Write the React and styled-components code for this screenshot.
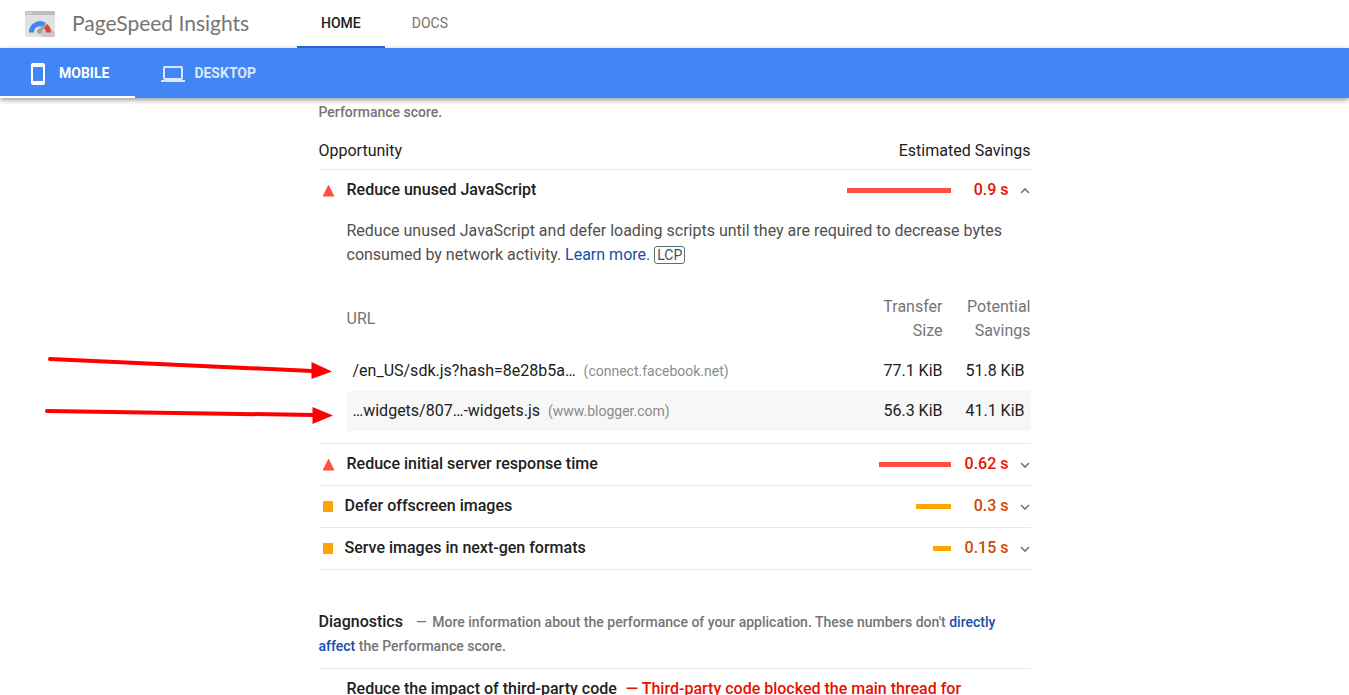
import React, {useState} from "react";
import styled, {createGlobalStyle} from "styled-components";

const GlobalStyle = createGlobalStyle`
    * {
        box-sizing: border-box;
    }
    body {
        margin: 0;
        background: #fff;
        color: #212121;
        font-family: Roboto, "Liberation Sans", sans-serif;
        font-size: 16px;
        line-height: 24px;
    }
`;

//whole window, the report is cut off at the bottom
const Page = styled.div`
    position: relative;
    display: flex;
    flex-direction: column;
    height: 100vh;
    overflow: hidden;
`;

//white bar with the logo and the site tabs
const TopBar = styled.header`
    display: flex;
    flex: none;
    align-items: stretch;
    height: 48px;
    padding-left: 24px;
    background: #fff;
`;

const Brand = styled.a`
    display: flex;
    align-items: center;
    gap: 16px;
    width: 273px;
    color: #757575;
    font-family: Lato, Roboto, sans-serif;
    font-size: 21px;
    text-decoration: none;
`;

const BrandName = styled.span`
    padding-bottom: 3px;
`;

const SiteNav = styled.nav`
    display: flex;
    gap: 3px;
`;

const SiteTab = styled.a`
    padding: 12px 24px 0;
    border-bottom: 2px solid ${(props) => (props.$active ? "#3367d6" : "transparent")};
    color: ${(props) => (props.$active ? "#212121" : "#757575")};
    font-size: 14px;
    font-weight: ${(props) => (props.$active ? 500 : 400)};
    line-height: 22px;
    text-decoration: none;
`;

//blue bar with the mobile / desktop switch
const DeviceBar = styled.div`
    position: relative;
    z-index: 1;
    display: flex;
    flex: none;
    height: 50px;
    background: #4285f4;
    box-shadow: 0 2px 5px rgba(0, 0, 0, 0.4);
`;

const DeviceTab = styled.button`
    display: flex;
    align-items: center;
    gap: 9px;
    padding: 3px 26px 0;
    border: none;
    border-bottom: 2px solid ${(props) => (props.$active ? "#fff" : "transparent")};
    background: none;
    color: #fff;
    font-family: inherit;
    font-size: 14px;
    font-weight: 700;
    cursor: pointer;

    & > * {
        opacity: ${(props) => (props.$active ? 1 : 0.8)};
    }
`;

const DeviceLabel = styled.span`
    padding-bottom: 2px;
`;

const Report = styled.main`
    width: 100%;
    max-width: 712px;
    margin: 0 auto;
    padding-top: 2px;
`;

const Note = styled.span`
    color: #757575;
    font-size: 14px;
    font-weight: 500;
`;

const Link = styled.a`
    color: #174ea6;
    text-decoration: none;
`;

const ColumnTitles = styled.div`
    display: flex;
    justify-content: space-between;
    margin-top: 15px;
    padding-bottom: 6px;
    border-bottom: 1px solid #e8e8e8;
`;

const Audit = styled.section`
    border-bottom: 1px solid #e8e8e8;
`;

const AuditHeader = styled.button`
    display: flex;
    align-items: center;
    width: 100%;
    height: 41px;
    padding: 0 0 2px 4px;
    border: none;
    background: none;
    color: #212121;
    font: inherit;
    font-weight: 500;
    text-align: left;
    cursor: pointer;
`;

const AuditTitle = styled.span`
    flex: 1;
    margin-left: 12px;
`;

//red triangle for a fail, orange square for an average
const FailMark = styled.span`
    width: 12px;
    height: 12px;
    margin-top: 2px;
    background: #ff4e42;
    clip-path: polygon(50% 0, 100% 100%, 0 100%);
`;

const AverageMark = styled.span`
    width: 10px;
    height: 11px;
    margin-top: 2px;
    background: #ffa400;
`;

const Sparkline = styled.span`
    height: 5px;
    margin-top: 2px;
    background: ${(props) => (props.$fail ? "#ff4e42" : "#ffa400")};
`;

const Savings = styled.span`
    width: 58px;
    color: ${(props) => (props.$fail ? "#eb0f00" : "#d04900")};
    text-align: right;
`;

const Chevron = styled.svg`
    width: 10px;
    height: 7px;
    margin: ${(props) => (props.$open ? "2px" : "4px")} 1px 0 11px;
    transform: ${(props) => (props.$open ? "none" : "rotate(180deg)")};
`;

const Details = styled.div`
    padding: 8px 0 12px 28px;
`;

const Description = styled.p`
    margin: 0;
    color: #4f4f4f;
`;

const Chip = styled.span`
    display: inline-block;
    padding: 0 2px;
    border: 1px solid #546e7a;
    border-radius: 3px;
    font-size: 14px;
    line-height: 16px;
`;

const UrlTable = styled.table`
    width: 100%;
    margin-top: 20px;
    border-collapse: collapse;
    table-layout: fixed;

    th {
        padding: 8px 0;
        color: #757575;
        font-weight: 400;
        text-align: right;
    }
    th:first-child {
        text-align: left;
    }
    td {
        padding: 8px 0;
        text-align: right;
    }
    td:first-child {
        padding-left: 6px;
        text-align: left;
    }
    td:last-child {
        padding-right: 6px;
    }
    tbody tr:nth-child(even) {
        background: #f7f7f7;
    }
`;

const Col = styled.col`
    width: ${(props) => props.$width};
`;

const Host = styled.span`
    margin-left: 8px;
    color: #8c8c8c;
    font-size: 14px;
`;

const Diagnostics = styled.section`
    margin-top: 40px;
`;

const GroupHeader = styled.div`
    padding-bottom: 10px;
    border-bottom: 1px solid #e8e8e8;
`;

const GroupTitle = styled.h2`
    display: inline;
    margin: 0 12px 0 0;
    font-size: 16px;
    font-weight: 500;
`;

const Dash = styled.span`
    margin: 0 2px 0 1px;
`;

const DiagnosticRow = styled.p`
    margin: 0;
    padding: 8px 28px;
    font-weight: 500;
    white-space: nowrap;
`;

const DisplayText = styled.span`
    margin-left: 9px;
    color: #eb0f00;
`;

//hand drawn arrows pointing at the two urls
const Arrows = styled.svg`
    position: absolute;
    z-index: 2;
    top: 350px;
    left: 40px;
    pointer-events: none;
`;

const Logo = () => (
    <svg width="32" height="32" viewBox="0 0 32 32" aria-hidden="true">
        <rect x="1" y="3" width="30" height="26" rx="2" fill="#e1e1e1"/>
        <path d="M3 3h26a2 2 0 0 1 2 2v2H1V5a2 2 0 0 1 2-2z" fill="#bdbdbd"/>
        <circle cx="3.6" cy="5" r=".8" fill="#fff"/>
        <circle cx="6.4" cy="5" r=".8" fill="#fff"/>
        <path d="M22 15l9 9v3a2 2 0 0 1-2 2H19l-5-5z" fill="#c9c9c9"/>
        <path d="M7.500 24.500a8.500 8.500 0 0 1 13-7.500" fill="none" stroke="#4285f4" strokeWidth="5"/>
        <path d="M21.500 18A8.500 8.500 0 0 1 24.500 24.500" fill="none" stroke="#db4437" strokeWidth="5"/>
        <path d="M22.500 15l-5 9a2.300 2.300 0 1 1-3.500-2.500z" fill="#9e9e9e"/>
    </svg>
);

const PhoneIcon = () => (
    <svg width="24" height="24" viewBox="0 0 24 24" fill="currentColor" aria-hidden="true">
        <path fillRule="evenodd" d="M7 1h10a2 2 0 0 1 2 2v18a2 2 0 0 1-2 2H7a2 2 0 0 1-2-2V3a2 2 0 0 1 2-2zm0 4v14h10V5z"/>
    </svg>
);

const LaptopIcon = () => (
    <svg width="24" height="24" viewBox="0 0 24 24" fill="currentColor" aria-hidden="true">
        <path fillRule="evenodd" d="M4 4h16a2 2 0 0 1 2 2v10a2 2 0 0 1-2 2h4v2H0v-2h4a2 2 0 0 1-2-2V6a2 2 0 0 1 2-2zm0 2v10h16V6z"/>
    </svg>
);

const resources = [
    {url: "/en_US/sdk.js?hash=8e28b5a…", host: "connect.facebook.net", size: "77.1 KiB", savings: "51.8 KiB"},
    {url: "…widgets/807…-widgets.js", host: "www.blogger.com", size: "56.3 KiB", savings: "41.1 KiB"},
];

//one line of the opportunities list, opens when it has details
const Opportunity = ({title, seconds, fail, startOpen, children}) => {
    const [open, setOpen] = useState(Boolean(startOpen));

    return (
        <Audit>
            <AuditHeader type="button" aria-expanded={open} onClick={() => setOpen(!open)}>
                {fail ? <FailMark/> : <AverageMark/>}
                <AuditTitle>{title}</AuditTitle>
                <Sparkline $fail={fail} style={{width: Math.ceil(seconds * 115)}}/>
                <Savings $fail={fail}>{seconds} s</Savings>
                <Chevron $open={open} viewBox="0 0 10 7" aria-hidden="true">
                    <path d="M1 6l4-4 4 4" fill="none" stroke="#757575" strokeWidth="1.600"/>
                </Chevron>
            </AuditHeader>
            {open && children ? <Details>{children}</Details> : undefined}
        </Audit>
    );
};

const App = () => {
    const [device, setDevice] = useState("mobile");

    return (
        <Page>
            <GlobalStyle/>
            <TopBar>
                <Brand href="#"><Logo/><BrandName>PageSpeed Insights</BrandName></Brand>
                <SiteNav>
                    <SiteTab href="#home" $active>HOME</SiteTab>
                    <SiteTab href="#docs">DOCS</SiteTab>
                </SiteNav>
            </TopBar>
            <DeviceBar>
                <DeviceTab type="button" $active={device === "mobile"} onClick={() => setDevice("mobile")}>
                    <PhoneIcon/><DeviceLabel>MOBILE</DeviceLabel>
                </DeviceTab>
                <DeviceTab type="button" $active={device === "desktop"} onClick={() => setDevice("desktop")}>
                    <LaptopIcon/><DeviceLabel>DESKTOP</DeviceLabel>
                </DeviceTab>
            </DeviceBar>
            <Report>
                <Note>Performance score.</Note>
                <ColumnTitles>
                    <span>Opportunity</span>
                    <span>Estimated Savings</span>
                </ColumnTitles>
                <Opportunity title="Reduce unused JavaScript" seconds={0.9} fail startOpen>
                    <Description>
                        Reduce unused JavaScript and defer loading scripts until they are required to
                        decrease bytes consumed by network activity. <Link href="#learn">Learn more</Link>. <Chip>LCP</Chip>
                    </Description>
                    <UrlTable>
                        <colgroup>
                            <Col/>
                            <Col $width="80px"/>
                            <Col $width="88px"/>
                        </colgroup>
                        <thead>
                            <tr>
                                <th scope="col">URL</th>
                                <th scope="col">Transfer<br/>Size</th>
                                <th scope="col">Potential<br/>Savings</th>
                            </tr>
                        </thead>
                        <tbody>
                            {resources.map((item) =>
                                <tr key={item.url}>
                                    <td>{item.url}<Host>({item.host})</Host></td>
                                    <td>{item.size}</td>
                                    <td>{item.savings}</td>
                                </tr>
                            )}
                        </tbody>
                    </UrlTable>
                </Opportunity>
                <Opportunity title="Reduce initial server response time" seconds={0.62} fail/>
                <Opportunity title="Defer offscreen images" seconds={0.3}/>
                <Opportunity title="Serve images in next-gen formats" seconds={0.15}/>
                <Diagnostics>
                    <GroupHeader>
                        <GroupTitle>Diagnostics</GroupTitle>
                        <Note>
                            <Dash>—</Dash> More information about the performance of your application. These numbers
                            don't <Link href="#scoring">directly affect</Link> the Performance score.
                        </Note>
                    </GroupHeader>
                    <DiagnosticRow>
                        Reduce the impact of third-party code
                        <DisplayText>— Third-party code blocked the main thread for</DisplayText>
                    </DiagnosticRow>
                </Diagnostics>
            </Report>
            <Arrows width="300" height="80" viewBox="0 0 300 80" aria-hidden="true">
                <g stroke="#f00" strokeWidth="4" strokeLinecap="round">
                    <line x1="10" y1="9" x2="272" y2="21"/>
                    <line x1="7" y1="61" x2="274" y2="65"/>
                </g>
                <path d="M271.500 12v17l20.500-7.500zM272.500 57v17l20.500-8.500z" fill="#f00"/>
            </Arrows>
        </Page>
    );
};

export default App;
